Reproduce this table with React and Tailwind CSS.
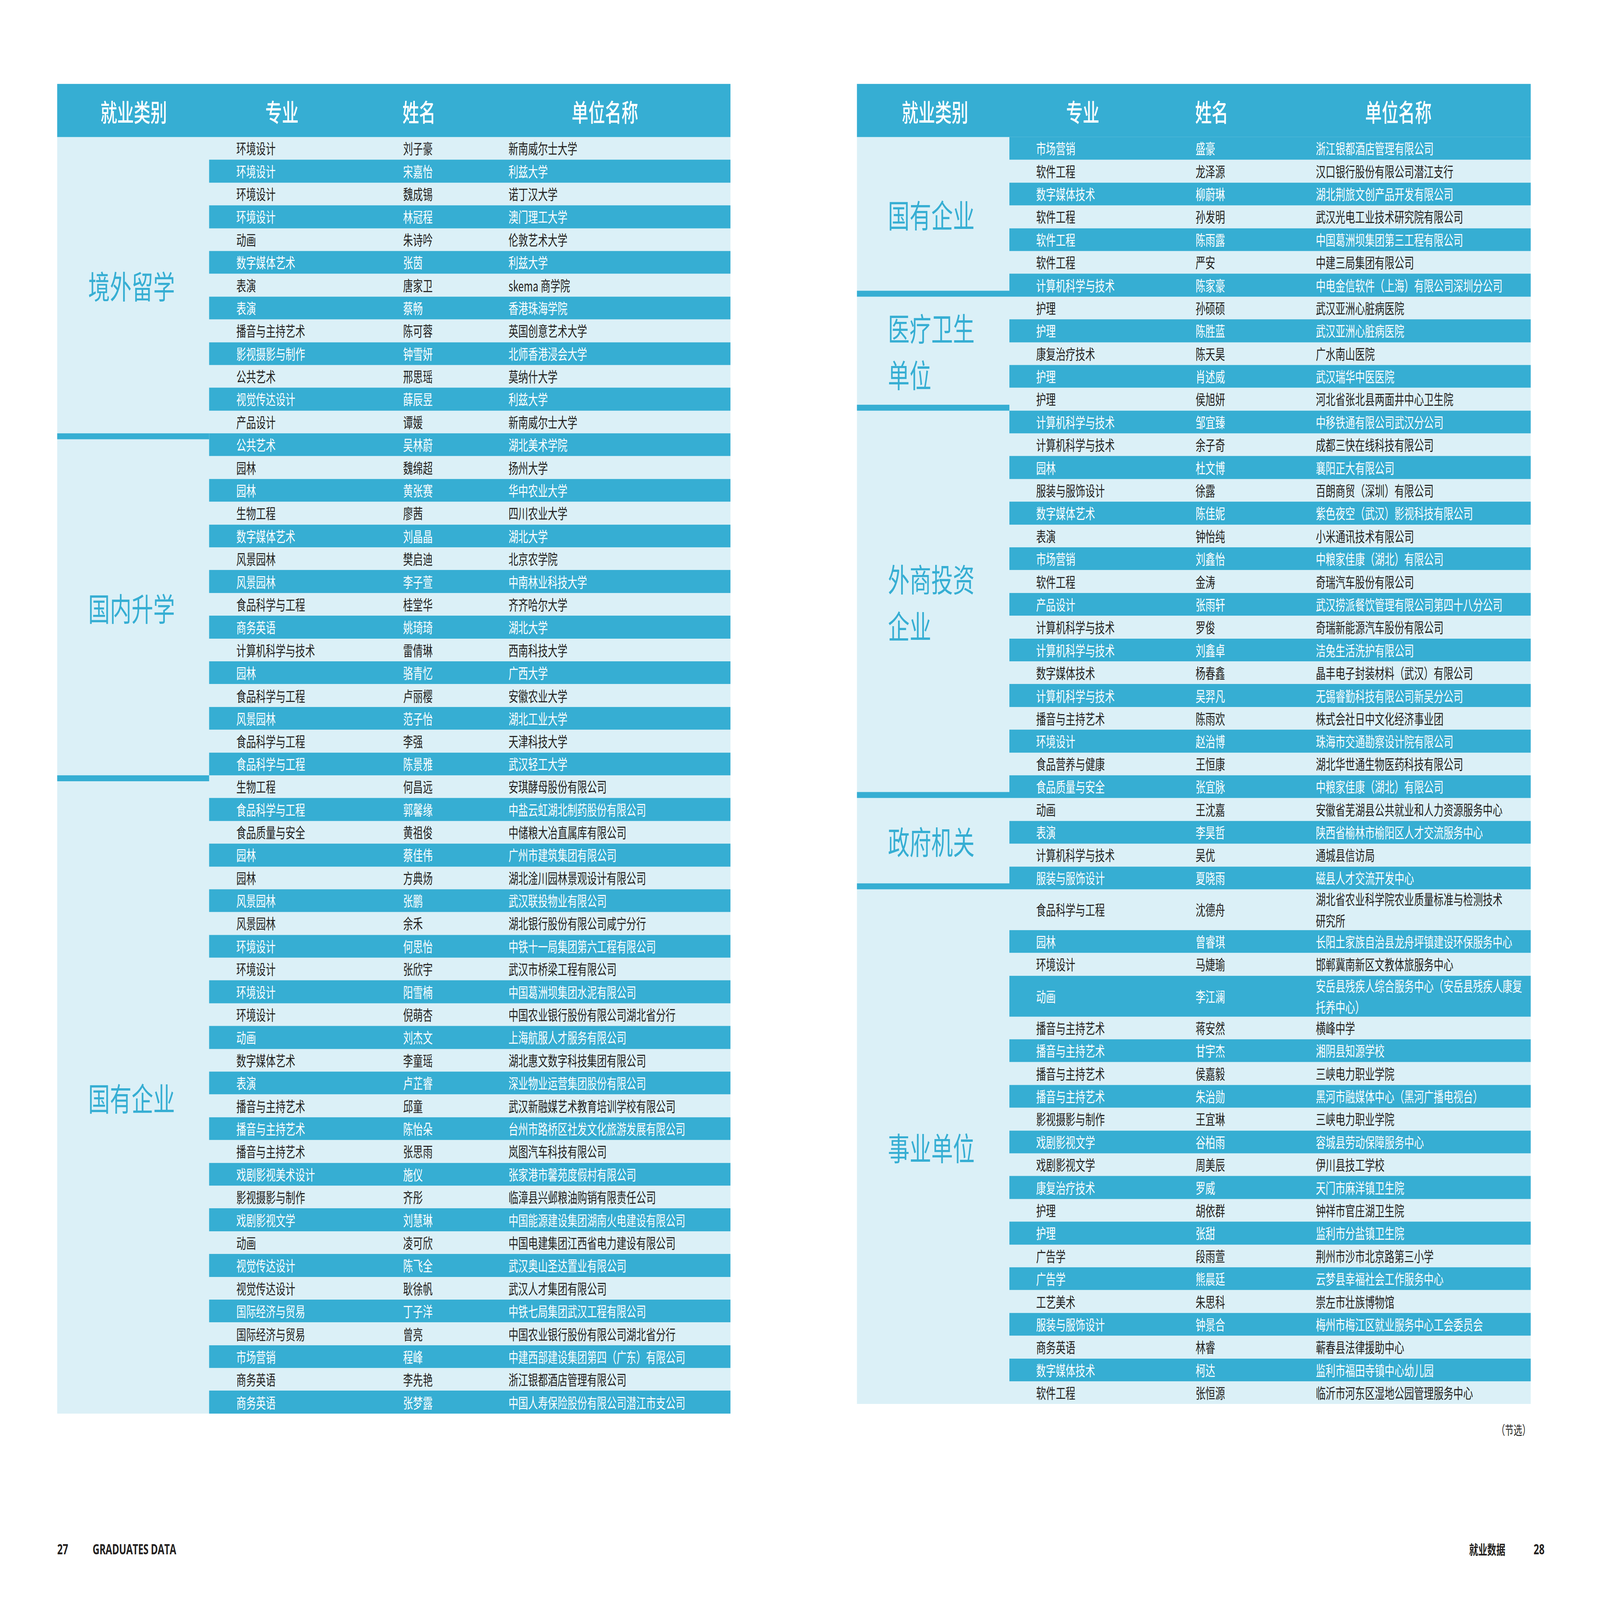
import { useEffect, useState } from 'react';

const LEFT = [
  {
    label: ['境外留学'],
    rows: [
      ['环境设计', '刘子豪', '新南威尔士大学'],
      ['环境设计', '宋嘉怡', '利兹大学'],
      ['环境设计', '魏成锡', '诺丁汉大学'],
      ['环境设计', '林冠程', '澳门理工大学'],
      ['动画', '朱诗吟', '伦敦艺术大学'],
      ['数字媒体艺术', '张茵', '利兹大学'],
      ['表演', '唐家卫', 'skema 商学院'],
      ['表演', '蔡畅', '香港珠海学院'],
      ['播音与主持艺术', '陈可蓉', '英国创意艺术大学'],
      ['影视摄影与制作', '钟雪妍', '北师香港浸会大学'],
      ['公共艺术', '邢思瑶', '莫纳什大学'],
      ['视觉传达设计', '薛辰昱', '利兹大学'],
      ['产品设计', '谭媛', '新南威尔士大学'],
    ],
  },
  {
    label: ['国内升学'],
    rows: [
      ['公共艺术', '吴林蔚', '湖北美术学院'],
      ['园林', '魏绵超', '扬州大学'],
      ['园林', '黄张赛', '华中农业大学'],
      ['生物工程', '廖茜', '四川农业大学'],
      ['数字媒体艺术', '刘晶晶', '湖北大学'],
      ['风景园林', '樊启迪', '北京农学院'],
      ['风景园林', '李子萱', '中南林业科技大学'],
      ['食品科学与工程', '桂堂华', '齐齐哈尔大学'],
      ['商务英语', '姚琦琦', '湖北大学'],
      ['计算机科学与技术', '雷倩琳', '西南科技大学'],
      ['园林', '骆青忆', '广西大学'],
      ['食品科学与工程', '卢丽樱', '安徽农业大学'],
      ['风景园林', '范子怡', '湖北工业大学'],
      ['食品科学与工程', '李强', '天津科技大学'],
      ['食品科学与工程', '陈景雅', '武汉轻工大学'],
    ],
  },
  {
    label: ['国有企业'],
    rows: [
      ['生物工程', '何昌远', '安琪酵母股份有限公司'],
      ['食品科学与工程', '郭馨缘', '中盐云虹湖北制药股份有限公司'],
      ['食品质量与安全', '黄祖俊', '中储粮大冶直属库有限公司'],
      ['园林', '蔡佳伟', '广州市建筑集团有限公司'],
      ['园林', '方典炀', '湖北淦川园林景观设计有限公司'],
      ['风景园林', '张鹏', '武汉联投物业有限公司'],
      ['风景园林', '余禾', '湖北银行股份有限公司咸宁分行'],
      ['环境设计', '何思怡', '中铁十一局集团第六工程有限公司'],
      ['环境设计', '张欣宇', '武汉市桥梁工程有限公司'],
      ['环境设计', '阳雪楠', '中国葛洲坝集团水泥有限公司'],
      ['环境设计', '倪萌杏', '中国农业银行股份有限公司湖北省分行'],
      ['动画', '刘杰文', '上海航服人才服务有限公司'],
      ['数字媒体艺术', '李童瑶', '湖北惠文数字科技集团有限公司'],
      ['表演', '卢芷睿', '深业物业运营集团股份有限公司'],
      ['播音与主持艺术', '邱童', '武汉新融媒艺术教育培训学校有限公司'],
      ['播音与主持艺术', '陈怡朵', '台州市路桥区社发文化旅游发展有限公司'],
      ['播音与主持艺术', '张思雨', '岚图汽车科技有限公司'],
      ['戏剧影视美术设计', '施仪', '张家港市馨苑度假村有限公司'],
      ['影视摄影与制作', '齐彤', '临漳县兴邺粮油购销有限责任公司'],
      ['戏剧影视文学', '刘慧琳', '中国能源建设集团湖南火电建设有限公司'],
      ['动画', '凌可欣', '中国电建集团江西省电力建设有限公司'],
      ['视觉传达设计', '陈飞全', '武汉奥山圣达置业有限公司'],
      ['视觉传达设计', '耿徐帆', '武汉人才集团有限公司'],
      ['国际经济与贸易', '丁子洋', '中铁七局集团武汉工程有限公司'],
      ['国际经济与贸易', '曾亮', '中国农业银行股份有限公司湖北省分行'],
      ['市场营销', '程峰', '中建西部建设集团第四（广东）有限公司'],
      ['商务英语', '李先艳', '浙江银都酒店管理有限公司'],
      ['商务英语', '张梦露', '中国人寿保险股份有限公司潜江市支公司'],
    ],
  },
];

const RIGHT = [
  {
    label: ['国有企业'],
    rows: [
      ['市场营销', '盛豪', '浙江银都酒店管理有限公司'],
      ['软件工程', '龙泽源', '汉口银行股份有限公司潜江支行'],
      ['数字媒体技术', '柳蔚琳', '湖北荆旅文创产品开发有限公司'],
      ['软件工程', '孙发明', '武汉光电工业技术研究院有限公司'],
      ['软件工程', '陈雨露', '中国葛洲坝集团第三工程有限公司'],
      ['软件工程', '严安', '中建三局集团有限公司'],
      ['计算机科学与技术', '陈家豪', '中电金信软件（上海）有限公司深圳分公司'],
    ],
  },
  {
    label: ['医疗卫生', '单位'],
    rows: [
      ['护理', '孙硕硕', '武汉亚洲心脏病医院'],
      ['护理', '陈胜蓝', '武汉亚洲心脏病医院'],
      ['康复治疗技术', '陈天昊', '广水南山医院'],
      ['护理', '肖述威', '武汉瑞华中医医院'],
      ['护理', '侯旭妍', '河北省张北县两面井中心卫生院'],
    ],
  },
  {
    label: ['外商投资', '企业'],
    rows: [
      ['计算机科学与技术', '邹宜臻', '中移铁通有限公司武汉分公司'],
      ['计算机科学与技术', '余子奇', '成都三快在线科技有限公司'],
      ['园林', '杜文博', '襄阳正大有限公司'],
      ['服装与服饰设计', '徐露', '百朗商贸（深圳）有限公司'],
      ['数字媒体艺术', '陈佳妮', '紫色夜空（武汉）影视科技有限公司'],
      ['表演', '钟怡纯', '小米通讯技术有限公司'],
      ['市场营销', '刘鑫怡', '中粮家佳康（湖北）有限公司'],
      ['软件工程', '金涛', '奇瑞汽车股份有限公司'],
      ['产品设计', '张雨轩', '武汉捞派餐饮管理有限公司第四十八分公司'],
      ['计算机科学与技术', '罗俊', '奇瑞新能源汽车股份有限公司'],
      ['计算机科学与技术', '刘鑫卓', '洁兔生活洗护有限公司'],
      ['数字媒体技术', '杨春鑫', '晶丰电子封装材料（武汉）有限公司'],
      ['计算机科学与技术', '吴羿凡', '无锡睿勤科技有限公司新吴分公司'],
      ['播音与主持艺术', '陈雨欢', '株式会社日中文化经济事业团'],
      ['环境设计', '赵治博', '珠海市交通勘察设计院有限公司'],
      ['食品营养与健康', '王恒康', '湖北华世通生物医药科技有限公司'],
      ['食品质量与安全', '张宜脉', '中粮家佳康（湖北）有限公司'],
    ],
  },
  {
    label: ['政府机关'],
    rows: [
      ['动画', '王沈嘉', '安徽省芜湖县公共就业和人力资源服务中心'],
      ['表演', '李昊哲', '陕西省榆林市榆阳区人才交流服务中心'],
      ['计算机科学与技术', '吴优', '通城县信访局'],
      ['服装与服饰设计', '夏晓雨', '磁县人才交流开发中心'],
    ],
  },
  {
    label: ['事业单位'],
    rows: [
      ['食品科学与工程', '沈德舟', ['湖北省农业科学院农业质量标准与检测技术', '研究所']],
      ['园林', '曾睿琪', '长阳土家族自治县龙舟坪镇建设环保服务中心'],
      ['环境设计', '马婕瑜', '邯郸冀南新区文教体旅服务中心'],
      ['动画', '李江澜', ['安岳县残疾人综合服务中心（安岳县残疾人康复', '托养中心）']],
      ['播音与主持艺术', '蒋安然', '横峰中学'],
      ['播音与主持艺术', '甘宇杰', '湘阴县知源学校'],
      ['播音与主持艺术', '侯嘉毅', '三峡电力职业学院'],
      ['播音与主持艺术', '朱治勋', '黑河市融媒体中心（黑河广播电视台）'],
      ['影视摄影与制作', '王宜琳', '三峡电力职业学院'],
      ['戏剧影视文学', '谷柏雨', '容城县劳动保障服务中心'],
      ['戏剧影视文学', '周美辰', '伊川县技工学校'],
      ['康复治疗技术', '罗威', '天门市麻洋镇卫生院'],
      ['护理', '胡依群', '钟祥市官庄湖卫生院'],
      ['护理', '张甜', '监利市分盐镇卫生院'],
      ['广告学', '段雨萱', '荆州市沙市北京路第三小学'],
      ['广告学', '熊晨廷', '云梦县幸福社会工作服务中心'],
      ['工艺美术', '朱思科', '崇左市壮族博物馆'],
      ['服装与服饰设计', '钟景合', '梅州市梅江区就业服务中心工会委员会'],
      ['商务英语', '林睿', '蕲春县法律援助中心'],
      ['数字媒体技术', '柯达', '监利市福田寺镇中心幼儿园'],
      ['软件工程', '张恒源', '临沂市河东区湿地公园管理服务中心'],
    ],
  },
];

const LEFT_CFG = {
  width: 'w-[2672px]',
  cat: 'w-[603px]',
  rowPad: 'pl-[108px]',
  rowH: 'h-[61.4px]',
  major: 'w-[662px]',
  name: 'w-[418px]',
  blueFirst: false,
  head: ['w-[608px]', 'w-[568px]', 'w-[520px]', 'w-[956px]'],
};

const RIGHT_CFG = {
  width: 'w-[2674px]',
  cat: 'w-[605px]',
  rowPad: 'pl-[106px]',
  rowH: 'h-[61.4px]',
  major: 'w-[633px]',
  name: 'w-[477px]',
  blueFirst: true,
  head: ['w-[620px]', 'w-[552px]', 'w-[472px]', 'w-[1010px]'],
};

function Row({ r, blue, cfg }) {
  const dbl = Array.isArray(r[2]);
  return (
    <div
      className={`flex items-center ${cfg.rowPad} ${dbl ? 'h-[110px]' : cfg.rowH} ${
        blue ? 'bg-[#36aed3] text-white' : 'text-[#231f20]'
      }`}
    >
      <div className={`${cfg.major} shrink-0 whitespace-nowrap`}>{r[0]}</div>
      <div className={`${cfg.name} shrink-0 whitespace-nowrap`}>{r[1]}</div>
      <div className="flex-1 whitespace-nowrap leading-[57px]">
        {dbl ? (
          <>
            {r[2][0]}
            <br />
            {r[2][1]}
          </>
        ) : (
          r[2]
        )}
      </div>
    </div>
  );
}

function Table({ sections, cfg, bands }) {
  let idx = 0;
  return (
    <div className={`${cfg.width} shrink-0 bg-[#dbf0f7] text-[39px] leading-none`}>
      <div className="flex h-[143px] items-center bg-[#36aed3] text-[66px] font-medium text-white">
        <div className={`${cfg.head[0]} shrink-0 text-center`}>就业类别</div>
        <div className={`${cfg.head[1]} shrink-0 text-center`}>专业</div>
        <div className={`${cfg.head[2]} shrink-0 text-center`}>姓名</div>
        <div className={`${cfg.head[3]} shrink-0 text-center`}>单位名称</div>
      </div>
      {sections.map((s, si) => {
        const start = idx;
        idx += s.rows.length;
        return (
          <div key={si} className="flex">
            <div
              className={`${cfg.cat} shrink-0 flex items-center pl-[123px] border-[#36aed3] ${bands[si]}`}
            >
              <p className="whitespace-nowrap text-[86px] leading-[126px] text-[#36aed3]">
                {s.label[0]}
                {s.label[1] ? (
                  <>
                    <br />
                    {s.label[1]}
                  </>
                ) : null}
              </p>
            </div>
            <div className="flex-1">
              {s.rows.map((r, ri) => {
                const g = start + ri;
                const blue = cfg.blueFirst ? g % 2 === 0 : g % 2 === 1;
                return <Row key={ri} r={r} blue={blue} cfg={cfg} />;
              })}
            </div>
          </div>
        );
      })}
    </div>
  );
}

function getScale() {
  if (typeof window === 'undefined') return { x: 1, y: 1 };
  return { x: window.innerWidth / 6350, y: window.innerHeight / 4309 };
}

export default function App() {
  const [s, setS] = useState(getScale);
  useEffect(() => {
    const f = () => setS(getScale());
    window.addEventListener('resize', f);
    return () => window.removeEventListener('resize', f);
  }, []);

  return (
    <div className="h-screen w-screen overflow-hidden bg-white">
      <div
        className="flex h-[4309px] w-[6350px] flex-col bg-white font-['Noto_Sans_CJK_SC','Noto_Sans',sans-serif] text-[#231f20]"
        style={{ transform: `scale(${s.x}, ${s.y})`, transformOrigin: '0 0' }}
      >
        <div className="flex items-start pl-[227px] pt-[226px]">
          <Table sections={LEFT} cfg={LEFT_CFG} bands={['', 'border-t-[16px]', 'border-t-[16px]']} />
          <div className="ml-[502px] flex w-[2674px] shrink-0 flex-col">
            <Table
              sections={RIGHT}
              cfg={RIGHT_CFG}
              bands={['border-b-[16px]', 'border-b-[16px]', 'border-b-[16px]', 'border-b-[16px]', '']}
            />
            <div className="mt-[44px] self-end text-[34px] leading-[50px] text-[#231f20]">（节选）</div>
          </div>
        </div>
        <div className="mb-[110px] mt-auto flex h-[56px] items-center justify-between pl-[227px] pr-[220px]">
          <div className="flex items-center font-['Open_Sans','Noto_Sans',sans-serif] text-[38px] font-bold">
            <span>27</span>
            <span className="ml-[97px] tracking-[-0.5px]">GRADUATES DATA</span>
          </div>
          <div className="flex items-center text-[36px] font-bold">
            <span>就业数据</span>
            <span className="ml-[112px] font-['Open_Sans','Noto_Sans',sans-serif] text-[38px]">28</span>
          </div>
        </div>
      </div>
    </div>
  );
}
